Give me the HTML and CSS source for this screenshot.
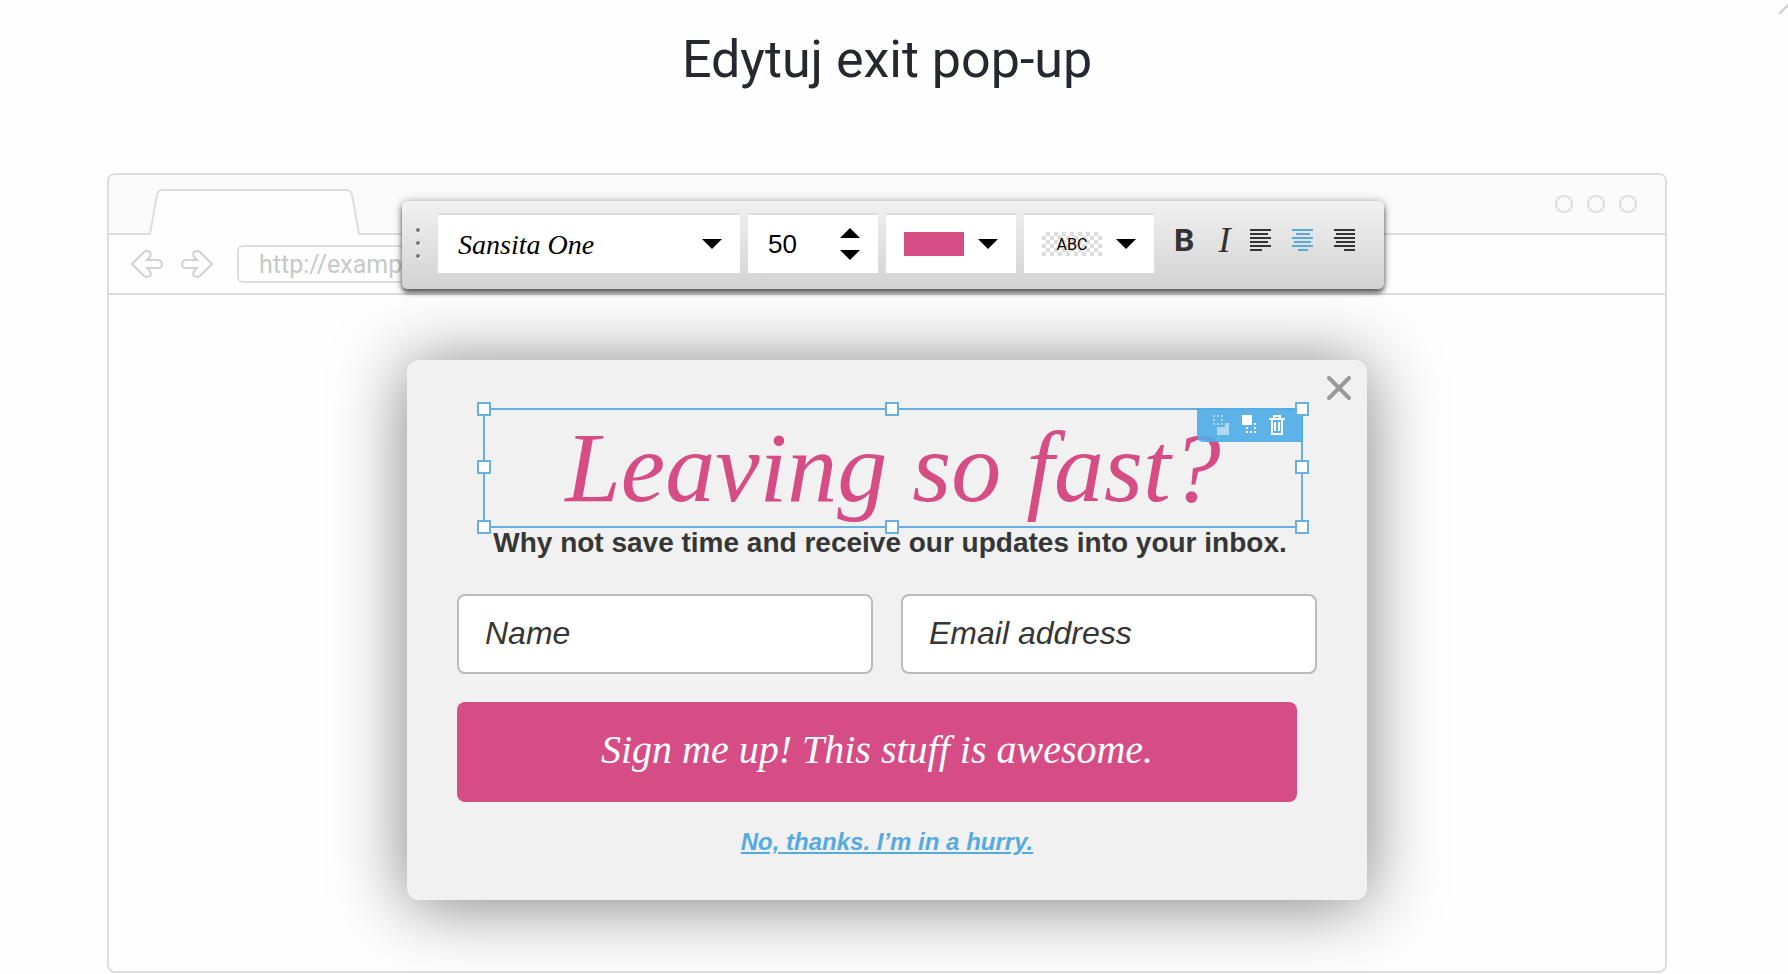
FILE: index.html
```
<!DOCTYPE html>
<html lang="pl">
<head>
    <meta charset="UTF-8">
    <meta name="viewport" content="width=device-width, initial-scale=1.0">
    <title>Edytuj exit pop-up</title>
    <link rel="stylesheet" href="styles.css">
</head>
<body>
    <button class="page-close" type="button" aria-label="Zamknij">
        <svg width="9" height="11" viewBox="0 0 9 11"><path d="M0 10 L10 0" /></svg>
    </button>
    <main class="page">
        <h1>Edytuj exit pop-up</h1>
        <div class="browser">
            <div class="tab-strip">
                <svg class="tab" width="212" height="46" viewBox="0 0 212 46">
                    <path class="tab-fill" d="M1 46 L1 45 L8 6 Q9 1 14 1 L197 1 Q202 1 203 6 L210 45 L210 46 Z" />
                    <path class="tab-line" d="M0 45 L1 45 L8 6 Q9 1 14 1 L197 1 Q202 1 203 6 L210 45 L212 45" />
                </svg>
                <div class="dots"><span></span><span></span><span></span></div>
            </div>
            <div class="nav-bar">
                <button type="button" aria-label="Back">
                    <svg width="32" height="28" viewBox="0 0 32 28"><path d="M1 14 L13 2 Q16 0 19 2 Q21 5 18 8 L16 10 H27 Q31 11 31 14 Q31 18 27 18 H16 L18 20 Q21 23 19 26 Q16 28 13 26 Z" /></svg>
                </button>
                <button type="button" aria-label="Forward">
                    <svg width="32" height="28" viewBox="0 0 32 28"><path d="M31 14 L19 2 Q16 0 13 2 Q11 5 14 8 L16 10 H5 Q1 11 1 14 Q1 18 5 18 H16 L14 20 Q11 23 13 26 Q16 28 19 26 Z" /></svg>
                </button>
                <input class="url" type="text" value="http://example.com" aria-label="Address">
            </div>

            <div class="toolbar">
                <span class="grip"><i></i><i></i><i></i></span>
                <div class="field field-font">
                    <select aria-label="Font">
                        <option>Sansita One</option>
                    </select>
                    <svg class="caret" width="20" height="10" viewBox="0 0 20 10"><path d="M0 0 H20 L10 10 Z" /></svg>
                </div>
                <div class="field field-size">
                    <input type="text" value="50" aria-label="Font size">
                    <div class="stepper">
                        <button type="button" aria-label="Increase"><svg width="20" height="10" viewBox="0 0 20 10"><path d="M0 10 H20 L10 0 Z" /></svg></button>
                        <button type="button" aria-label="Decrease"><svg width="20" height="10" viewBox="0 0 20 10"><path d="M0 0 H20 L10 10 Z" /></svg></button>
                    </div>
                </div>
                <button class="field field-color" type="button" aria-label="Text color">
                    <span class="swatch"></span>
                    <svg width="20" height="10" viewBox="0 0 20 10"><path d="M0 0 H20 L10 10 Z" /></svg>
                </button>
                <button class="field field-color" type="button" aria-label="Highlight color">
                    <span class="swatch swatch-abc">ABC</span>
                    <svg width="20" height="10" viewBox="0 0 20 10"><path d="M0 0 H20 L10 10 Z" /></svg>
                </button>
                <div class="styles">
                    <button class="bold" type="button" aria-label="Bold">B</button>
                    <button class="italic" type="button" aria-label="Italic">I</button>
                    <button class="align" type="button" aria-label="Align left">
                        <svg width="22" height="22" viewBox="0 0 22 22"><path d="M0 1H21M0 5H18M0 9H21M0 13H18M0 17H21M0 21H12" /></svg>
                    </button>
                    <button class="align active" type="button" aria-label="Align center">
                        <svg width="22" height="22" viewBox="0 0 22 22"><path d="M0 1H21M4 5H18M0 9H21M2 13H19M0 17H21M6 21H16" /></svg>
                    </button>
                    <button class="align" type="button" aria-label="Align right">
                        <svg width="22" height="22" viewBox="0 0 22 22"><path d="M0 1H21M2 5H21M0 9H21M2 13H21M0 17H21M10 21H21" /></svg>
                    </button>
                </div>
            </div>

            <div class="stage">
                <form class="popup">
                    <button class="popup-close" type="button" aria-label="Close">
                        <svg width="24" height="24" viewBox="0 0 24 24"><path d="M2 2 L22 22 M22 2 L2 22" /></svg>
                    </button>
                    <div class="selection">
                        <h2>Leaving so fast?</h2>
                        <div class="actions">
                            <button class="disabled" type="button" aria-label="Send back">
                                <svg width="17" height="20" viewBox="0 0 17 20">
                                    <path class="dotted" d="M0 1H12M0 9H12M1 4V8M9 4V8" />
                                    <path d="M12 8H16V20H4V12H12Z" />
                                </svg>
                            </button>
                            <button type="button" aria-label="Bring forward">
                                <svg width="15" height="20" viewBox="0 0 15 20">
                                    <path d="M0 0H10V10H0Z" />
                                    <path class="dotted" d="M4 17H14M4 13H6M12 9H14M12 13H14" />
                                </svg>
                            </button>
                            <button type="button" aria-label="Delete">
                                <svg width="16" height="20" viewBox="0 0 16 20"><path class="line" d="M0 4H16M5 4V1H11V4M3 5V19H13V5M6 7V16M10 7V16" /></svg>
                            </button>
                        </div>
                        <span class="handle top left"></span>
                        <span class="handle top center"></span>
                        <span class="handle top right"></span>
                        <span class="handle middle left"></span>
                        <span class="handle middle right"></span>
                        <span class="handle bottom left"></span>
                        <span class="handle bottom center"></span>
                        <span class="handle bottom right"></span>
                    </div>
                    <p class="lead">Why not save time and receive our updates into your inbox.</p>
                    <div class="inputs">
                        <input type="text" placeholder="Name" aria-label="Name">
                        <input type="email" placeholder="Email address" aria-label="Email address">
                    </div>
                    <button class="submit" type="submit">Sign me up! This stuff is awesome.</button>
                    <a class="decline" href="#">No, thanks. I’m in a hurry.</a>
                </form>
            </div>
        </div>
    </main>
</body>
</html>
```
FILE: styles.css
```
* {
    box-sizing: border-box;
}
body {
    margin: 0;
    background-color: #fefefe;
    font-family: Roboto, sans-serif;
    color: #363636;
    overflow-x: hidden;
}
button {
    padding: 0;
    border: 0;
    background: none;
    color: inherit;
    cursor: pointer;
}
svg {
    display: block;
}
.page {
    padding: 30px 121px 1px 107px;
}
.page-close {
    position: absolute;
    top: 4px;
    right: 0;
}
.page-close path {
    stroke: #ccc;
    stroke-width: 2;
}
h1 {
    margin: 0 0 83px;
    font-size: 52px;
    line-height: 60px;
    font-weight: 400;
    text-align: center;
    color: #26282f;
}

/* browser frame */
.browser {
    position: relative;
    border: 2px solid #ddd;
    border-radius: 8px;
}
.tab-strip {
    display: flex;
    justify-content: space-between;
    align-items: flex-end;
    height: 60px;
    padding: 0 28px 0 40px;
    background-color: #fafafa;
    border-bottom: 2px solid #ddd;
    border-radius: 6px 6px 0 0;
}
.tab {
    margin-bottom: -2px;
}
.tab-fill {
    fill: #fefefe;
}
.tab-line {
    fill: none;
    stroke: #ddd;
    stroke-width: 2;
}
.dots {
    display: flex;
    gap: 14px;
    align-self: center;
}
.dots span {
    width: 18px;
    height: 18px;
    border: 2px solid #ddd;
    border-radius: 50%;
}
.nav-bar {
    display: flex;
    align-items: center;
    gap: 18px;
    height: 60px;
    padding: 0 22px;
    border-bottom: 2px solid #ddd;
}
.nav-bar path {
    fill: none;
    stroke: #d2d2d2;
    stroke-width: 2;
}
.url {
    width: 420px;
    height: 38px;
    margin-left: 6px;
    padding: 0 20px;
    border: 2px solid #ddd;
    border-radius: 6px;
    background: none;
    font: 25px Roboto, sans-serif;
    color: #c8c8c8;
}

/* text toolbar, floats over the frame */
.toolbar {
    position: absolute;
    z-index: 2;
    top: 26px;
    left: calc(50% - 485px);
    display: flex;
    align-items: center;
    gap: 8px;
    width: 982px;
    height: 88px;
    padding: 0 24px 4px 14px;
    border-radius: 6px;
    background: linear-gradient(#f1f1f1, #d2d2d2);
    box-shadow: 0 4px 4px rgba(0, 0, 0, 0.5), 0 1px 8px rgba(0, 0, 0, 0.4);
}
.grip {
    display: flex;
    flex-direction: column;
    gap: 9px;
    width: 14px;
}
.grip i {
    width: 4px;
    height: 4px;
    border-radius: 50%;
    background-color: #777;
    box-shadow: 1px 1px 0 #fff;
}
.field {
    display: flex;
    align-items: center;
    justify-content: space-between;
    height: 60px;
    background-color: #fff;
    border-top: 2px solid #ddd;
}
.field-font {
    position: relative;
    width: 302px;
}
.field-font select {
    width: 100%;
    height: 100%;
    padding: 0 20px;
    border: 0;
    background: none;
    appearance: none;
    font: italic 28px "Apple Chancery", "Liberation Serif", serif;
    color: #000;
}
.field-font .caret {
    position: absolute;
    right: 18px;
    pointer-events: none;
}
.field-size {
    width: 130px;
    padding: 0 18px 0 20px;
}
.field-size input {
    width: 60px;
    padding: 0;
    border: 0;
    font: 26px "Liberation Sans", Arial, sans-serif;
    color: #000;
}
.stepper button {
    display: block;
}
.stepper button + button {
    margin-top: 12px;
}
.field-color {
    width: 130px;
    padding: 0 18px;
}
.swatch {
    width: 60px;
    height: 24px;
    background-color: #d64d86;
}
.swatch-abc {
    background: repeating-conic-gradient(#ddd 0 25%, #fff 0 50%) 0 0 / 8px 8px;
    font: 16px/26px Roboto, sans-serif;
    color: #000;
    text-align: center;
}
.styles {
    display: flex;
    align-items: center;
    gap: 20px;
    margin-left: 12px;
    padding-bottom: 6px;
    color: #333;
}
.bold {
    font: 700 32px/32px Roboto, sans-serif;
}
.italic {
    width: 16px;
    font: italic 400 36px/32px "Liberation Serif", serif;
    text-align: right;
}
.align path {
    stroke: currentColor;
    stroke-width: 2;
}
.align.active {
    color: #5aa9dd;
}

/* popup */
.stage {
    display: flex;
    justify-content: center;
    padding: 65px 0 71px;
}
.popup {
    position: relative;
    width: 960px;
    padding: 48px 50px 44px;
    border-radius: 12px;
    background-color: #f1f1f1;
    box-shadow: 0 4px 70px rgba(0, 0, 0, 0.5);
    font-family: "Liberation Sans", Arial, sans-serif;
}
.popup-close {
    position: absolute;
    top: 16px;
    right: 16px;
}
.popup-close path {
    stroke: #999;
    stroke-width: 4;
    stroke-linecap: round;
}
.selection {
    position: relative;
    height: 120px;
    margin: 0 14px 0 26px;
    border: 2px solid #69b0e2;
}
h2 {
    margin: 0;
    font: italic 100px/116px "Apple Chancery", "Liberation Serif", serif;
    text-align: center;
    color: #d64d86;
}
.actions {
    position: absolute;
    top: -2px;
    right: -2px;
    display: flex;
    align-items: center;
    gap: 12px;
    width: 106px;
    height: 34px;
    padding-left: 16px;
    border-radius: 0 0 0 6px;
    background-color: rgba(80, 172, 231, 0.92);
}
.actions path {
    fill: #fff;
}
.actions .dotted {
    fill: none;
    stroke: #fff;
    stroke-width: 2;
    stroke-dasharray: 2 2;
}
.actions .line {
    fill: none;
    stroke: #fff;
    stroke-width: 2;
}
.actions .disabled {
    opacity: 0.5;
}
.handle {
    position: absolute;
    width: 14px;
    height: 14px;
    border: 2px solid #69b0e2;
    background-color: #fff;
}
.top {
    top: -8px;
}
.middle {
    top: calc(50% - 8px);
}
.bottom {
    bottom: -8px;
}
.left {
    left: -8px;
}
.center {
    left: calc(50% - 8px);
}
.right {
    right: -8px;
}
.lead {
    margin: 0 0 36px;
    padding-left: 6px;
    font-size: 28px;
    line-height: 30px;
    font-weight: 700;
    text-align: center;
    white-space: nowrap;
}
.inputs {
    display: flex;
    gap: 28px;
}
.inputs input {
    flex: 1;
    min-width: 0;
    height: 80px;
    padding: 0 26px 2px;
    border: 2px solid #bbb;
    border-radius: 8px;
    background-color: #fff;
    font: italic 32px "Liberation Sans", Arial, sans-serif;
}
.inputs input::placeholder {
    color: #363636;
}
.submit {
    display: block;
    width: 840px;
    height: 100px;
    margin: 28px 0 26px;
    padding-bottom: 6px;
    border-radius: 8px;
    background-color: #d64d86;
    font: italic 40px "Apple Chancery", "Liberation Serif", serif;
    color: #fff;
}
.decline {
    display: block;
    font-size: 24px;
    line-height: 28px;
    font-weight: 700;
    font-style: italic;
    text-align: center;
    color: #56aade;
}
```
